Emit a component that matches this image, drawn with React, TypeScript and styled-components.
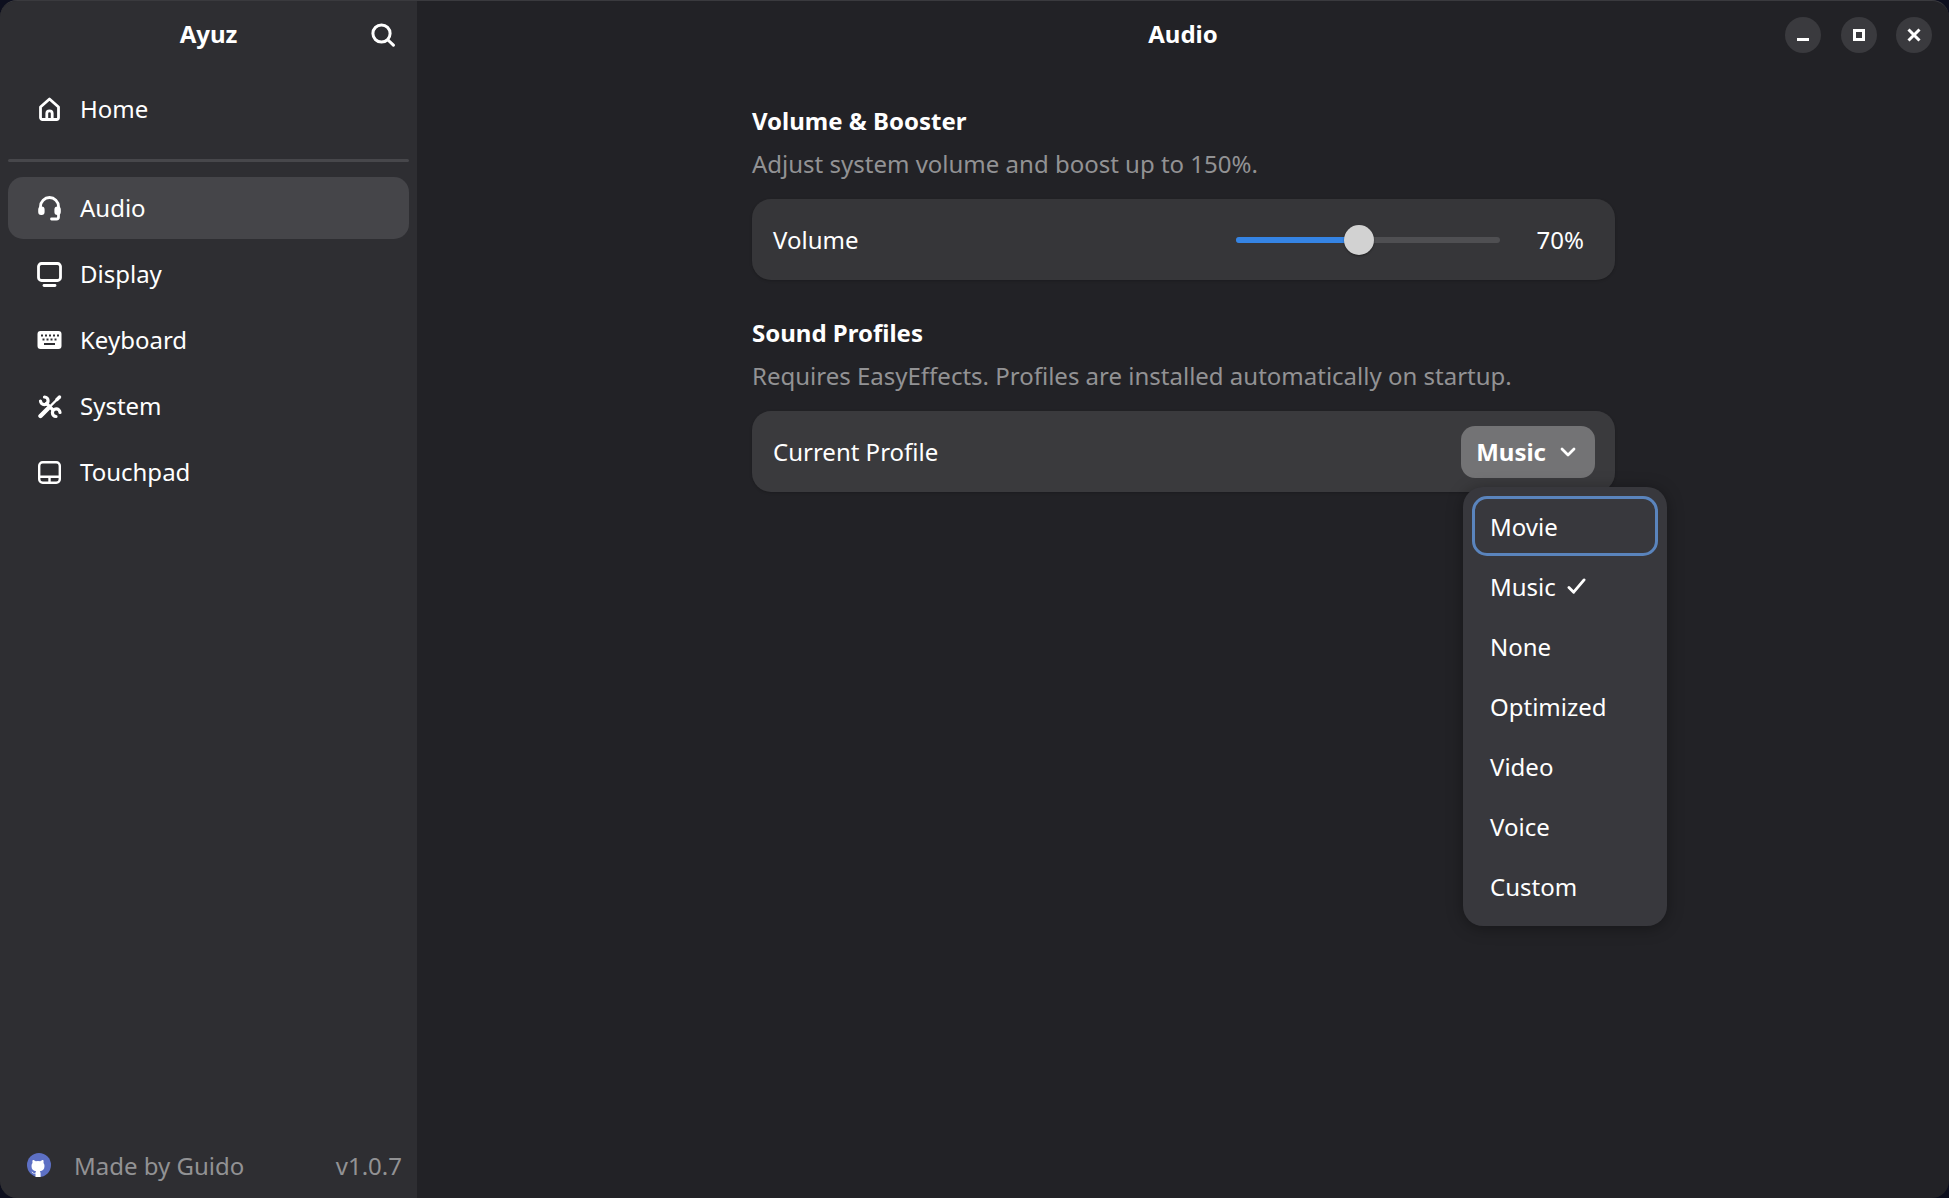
import styled, { createGlobalStyle } from "styled-components";

const GlobalStyle = createGlobalStyle`
  html, body {
    margin: 0;
    padding: 0;
    background: #0d0f1e;
  }
  * {
    box-sizing: border-box;
  }
`;

const Desktop = styled.div`
  width: 1949px;
  height: 1198px;
  background: #0d0f1e;
  font-family: "Noto Sans", "Open Sans", sans-serif;
  font-size: 24px;
  color: #ffffff;
  overflow: hidden;
`;

const Window = styled.div`
  display: flex;
  width: 100%;
  height: 100%;
  border-top: 1px solid #3a3a3e;
  border-radius: 17px;
  overflow: hidden;
  background: #222226;
`;

const Sidebar = styled.aside`
  display: flex;
  flex-direction: column;
  flex: 0 0 417px;
  background: #2e2e32;
`;

const SideHeader = styled.header`
  display: grid;
  grid-template-columns: 1fr auto 1fr;
  align-items: center;
  height: 67px;
  padding: 0 22px;
`;

const AppName = styled.h1`
  grid-column: 2;
  margin: 0;
  padding-bottom: 2px;
  font-size: 24px;
  font-weight: 700;
`;

const SearchButton = styled.span`
  display: flex;
  justify-self: end;
`;

const NavList = styled.nav`
  display: flex;
  flex-direction: column;
  gap: 4px;
  padding: 10px 8px 0;
`;

const NavItem = styled.a<{ $active?: boolean }>`
  display: flex;
  align-items: center;
  gap: 18px;
  height: 62px;
  padding: 0 29px;
  border-radius: 15px;
  background: ${(p) => (p.$active ? "#454549" : "transparent")};
  color: #ffffff;
`;

const NavLabel = styled.span`
  padding-bottom: 2px;
`;

const Separator = styled.hr`
  width: 100%;
  height: 3px;
  margin: 15px 0 11px;
  border: 0;
  border-radius: 2px;
  background: #47474b;
`;

const SideFooter = styled.footer`
  display: flex;
  align-items: center;
  margin-top: auto;
  height: 66px;
  padding: 0 15px 0 27px;
  color: #929294;
`;

const FooterName = styled.span`
  margin-left: 23px;
`;

const Version = styled.span`
  margin-left: auto;
`;

const Main = styled.main`
  display: flex;
  flex-direction: column;
  flex: 1;
  min-width: 0;
`;

const TopBar = styled.header`
  display: grid;
  grid-template-columns: 1fr auto 1fr;
  align-items: center;
  height: 67px;
  padding: 0 17px;
`;

const PageTitle = styled.h2`
  grid-column: 2;
  margin: 0;
  padding-bottom: 2px;
  font-size: 24px;
  font-weight: 700;
`;

const WindowControls = styled.div`
  display: flex;
  justify-content: flex-end;
  gap: 19.5px;
`;

const WindowButton = styled.span`
  display: flex;
  align-items: center;
  justify-content: center;
  width: 36px;
  height: 36px;
  border-radius: 50%;
  background: #3a3a3e;
`;

const Content = styled.div`
  display: flex;
  flex-direction: column;
  width: 863px;
  margin-left: 335px;
  padding-top: 36px;
`;

const Section = styled.section`
  margin-bottom: 36px;
`;

const SectionTitle = styled.h3`
  margin: 0;
  font-size: 24px;
  line-height: 34px;
  font-weight: 700;
`;

const SectionHint = styled.p`
  margin: 9px 0 18px;
  line-height: 34px;
  color: #929294;
`;

const Card = styled.div<{ $light?: boolean }>`
  position: relative;
  display: flex;
  align-items: center;
  justify-content: space-between;
  height: 81px;
  padding: 0 20px 0 21px;
  border-radius: 19px;
  background: ${(p) => (p.$light ? "#3a3a3d" : "#363639")};
  box-shadow: 0 1px 3px rgba(0, 0, 0, 0.2);
`;

const VolumeControl = styled.div`
  display: flex;
  align-items: center;
  margin-right: 11px;
`;

const SliderTrack = styled.div`
  position: relative;
  width: 264px;
  height: 6px;
  border-radius: 3px;
  background: #4f4f52;
`;

const SliderFill = styled.div`
  height: 100%;
  border-radius: 3px;
  background: #3584e4;
`;

const SliderKnob = styled.div`
  position: absolute;
  top: 50%;
  width: 30px;
  height: 30px;
  border-radius: 50%;
  background: #d2d2d2;
  box-shadow: 0 1px 2px rgba(0, 0, 0, 0.4);
  transform: translate(-50%, -50%);
`;

const VolumeValue = styled.span`
  margin-left: 37px;
`;

const SelectButton = styled.div`
  display: flex;
  align-items: center;
  gap: 14px;
  height: 52px;
  padding: 0 19px 0 15px;
  border-radius: 14px;
  background: #737375;
  font-weight: 700;
`;

const Dropdown = styled.ul`
  position: absolute;
  top: 76px;
  right: -52px;
  width: 204px;
  height: 439px;
  margin: 0;
  padding: 9px;
  list-style: none;
  border-radius: 20px;
  background: #38383d;
  box-shadow: 0 2px 16px rgba(0, 0, 0, 0.35);
`;

const DropdownItem = styled.li<{ $focused?: boolean }>`
  display: flex;
  align-items: center;
  gap: 11px;
  height: 60px;
  padding: 0 15px;
  border-radius: 15px;
  border: 3px solid ${(p) => (p.$focused ? "#5a84bd" : "transparent")};
`;

const Icon = styled.svg`
  flex: none;
  fill: none;
  stroke: currentColor;
  stroke-linecap: round;
  stroke-linejoin: round;
`;

const FilledIcon = styled.svg`
  flex: none;
  fill: currentColor;
`;

const profiles = ["Movie", "Music", "None", "Optimized", "Video", "Voice", "Custom"];

const volume = 46.6;

export default function App() {
  return (
    <Desktop>
      <GlobalStyle />
      <Window>
        <Sidebar>
          <SideHeader>
            <AppName>Ayuz</AppName>
            <SearchButton>
              <Icon width="24" height="24" viewBox="0 0 24 24" strokeWidth="3">
                <circle cx="10.5" cy="10.5" r="8.6" />
                <path d="M17 17l5.400 5.200" />
              </Icon>
            </SearchButton>
          </SideHeader>
          <NavList>
            <NavItem>
              <Icon width="25" height="25" viewBox="0 0 25 25" strokeWidth="2.8">
                <path d="M3.500 10 12.500 2l9 8v10.500a2 2 0 0 1-2 2h-14a2 2 0 0 1-2-2z" />
                <path d="M9.800 22.500v-6a2.700 2.700 0 0 1 5.400 0v6" />
              </Icon>
              <NavLabel>Home</NavLabel>
            </NavItem>
            <Separator />
            <NavItem $active>
              <Icon width="25" height="25" viewBox="0 0 25 25" strokeWidth="2.8">
                <path d="M3.500 13V10.500a9 9 0 0 1 18 0V21a2 2 0 0 1-2 2h-5" />
                <rect x="2.600" y="12" width="3.600" height="5.500" rx="1.500" fill="currentColor" />
                <rect x="18.800" y="12" width="3.600" height="5.500" rx="1.500" fill="currentColor" />
              </Icon>
              <NavLabel>Audio</NavLabel>
            </NavItem>
            <NavItem>
              <Icon width="25" height="25" viewBox="0 0 25 25" strokeWidth="2.8">
                <rect x="1.500" y="1.500" width="22" height="17" rx="3" />
                <path d="M7 23.500h11" />
              </Icon>
              <NavLabel>Display</NavLabel>
            </NavItem>
            <NavItem>
              <FilledIcon width="25" height="25" viewBox="0 0 25 25">
                <path
                  fillRule="evenodd"
                  d="M3.500 3h18a3 3 0 0 1 3 3v12a3 3 0 0 1-3 3h-18a3 3 0 0 1-3-3V6a3 3 0 0 1 3-3zM4 6.500v2h2v-2zM8 6.500v2h2v-2zM12 6.500v2h2v-2zM16 6.500v2h2v-2zM20 6.500v2h2v-2zM5.500 10.500v2h2v-2zM9.500 10.500v2h2v-2zM13.500 10.500v2h2v-2zM17.500 10.500v2h2v-2zM7 15v2h11v-2z"
                />
              </FilledIcon>
              <NavLabel>Keyboard</NavLabel>
            </NavItem>
            <NavItem>
              <Icon width="25" height="25" viewBox="0 0 25 25" strokeWidth="3.2">
                <path d="M7.500 3A3.800 3.800 0 1 1 3.500 7" />
                <path d="M19 22.500A3.800 3.800 0 1 1 23 18.500" />
                <path d="M9.500 9.500 16 16" />
                <path d="M3.500 22 11 14.500" strokeWidth="4.400" />
                <path d="M11 14.500 19.500 6" strokeWidth="2.400" />
                <path d="M20 5.500 22.500 3" strokeWidth="3.400" />
              </Icon>
              <NavLabel>System</NavLabel>
            </NavItem>
            <NavItem>
              <Icon width="25" height="25" viewBox="0 0 25 25" strokeWidth="2.400">
                <rect x="2.200" y="2.200" width="20.600" height="20.600" rx="3.500" />
                <path d="M2.500 16.800h20M12.500 17v5.500" />
              </Icon>
              <NavLabel>Touchpad</NavLabel>
            </NavItem>
          </NavList>
          <SideFooter>
            <svg width="24" height="24" viewBox="0 0 24 24">
              <circle cx="12" cy="12" r="12" fill="#5d70c4" />
              <path
                fill="#ffffff"
                d="M8.500 24v-3.500c-2.500.4-3.500-.6-4-2 1 .2 1.600 1.300 2.300 1.500.6.200 1.200 0 1.700-.2.100-.7.400-1.200.7-1.500-3-.6-4.700-2-4.700-5.300 0-1.200.4-2.200 1-3-.2-.9-.2-2 .2-3 1.200 0 2.300.7 3 1.200a9 9 0 0 1 4.600 0c.7-.5 1.800-1.200 3-1.200.4 1 .4 2.100.2 3 .6.800 1 1.800 1 3 0 3.300-1.700 4.700-4.700 5.300.5.500.8 1.300.8 2.300V24z"
              />
            </svg>
            <FooterName>Made by Guido</FooterName>
            <Version>v1.0.7</Version>
          </SideFooter>
        </Sidebar>
        <Main>
          <TopBar>
            <PageTitle>Audio</PageTitle>
            <WindowControls>
              <WindowButton>
                <svg width="12" height="12" viewBox="0 0 12 12">
                  <rect y="9" width="12" height="3" fill="#ffffff" />
                </svg>
              </WindowButton>
              <WindowButton>
                <svg width="12" height="12" viewBox="0 0 12 12">
                  <path fill="#ffffff" fillRule="evenodd" d="M0 0h12v12H0zM3 3v6h6V3z" />
                </svg>
              </WindowButton>
              <WindowButton>
                <svg width="14" height="14" viewBox="0 0 14 14">
                  <path stroke="#ffffff" strokeWidth="3" d="M1.500 1.500l11 11M12.500 1.500l-11 11" />
                </svg>
              </WindowButton>
            </WindowControls>
          </TopBar>
          <Content>
            <Section>
              <SectionTitle>Volume &amp; Booster</SectionTitle>
              <SectionHint>Adjust system volume and boost up to 150%.</SectionHint>
              <Card>
                Volume
                <VolumeControl>
                  <SliderTrack>
                    <SliderFill style={{ width: `${volume}%` }} />
                    <SliderKnob style={{ left: `${volume}%` }} />
                  </SliderTrack>
                  <VolumeValue>70%</VolumeValue>
                </VolumeControl>
              </Card>
            </Section>
            <Section>
              <SectionTitle>Sound Profiles</SectionTitle>
              <SectionHint>Requires EasyEffects. Profiles are installed automatically on startup.</SectionHint>
              <Card $light>
                Current Profile
                <SelectButton>
                  Music
                  <Icon width="16" height="10" viewBox="0 0 16 10" strokeWidth="2.800">
                    <path d="M2 2l6 6 6-6" />
                  </Icon>
                </SelectButton>
                <Dropdown>
                  {profiles.map((name, i) => (
                    <DropdownItem key={name} $focused={i === 0}>
                      {name}
                      {name === "Music" && (
                        <Icon width="19" height="17" viewBox="0 0 20 18" strokeWidth="3">
                          <path d="M2 10l5 5L18 2" />
                        </Icon>
                      )}
                    </DropdownItem>
                  ))}
                </Dropdown>
              </Card>
            </Section>
          </Content>
        </Main>
      </Window>
    </Desktop>
  );
}
